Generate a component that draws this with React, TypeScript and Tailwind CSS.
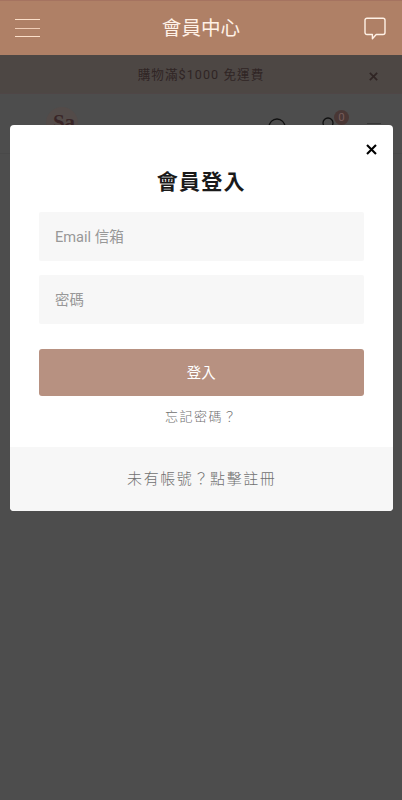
import { useState } from 'react';

function CloseIcon({ className }: { className?: string }) {
  return (
    <svg viewBox="0 0 12 12" fill="none" stroke="currentColor" strokeWidth="2.3" className={className}>
      <path d="M1.1 1.1 10.9 10.9M10.9 1.1 1.1 10.9" />
    </svg>
  );
}

function AppBar() {
  return (
    <header className="flex h-[55px] shrink-0 items-center justify-between border-t border-[#a57360] bg-[#af8066] pr-[16px] pl-[15px] text-[#fff1e6]">
      <button aria-label="選單" className="flex w-[25px] flex-col gap-[7.5px]">
        <span className="h-px w-full bg-[#fbdfc9]" />
        <span className="h-px w-full bg-[#f0cdb6]" />
        <span className="h-px w-full bg-[#fbdfc9]" />
      </button>
      <h1 className="mt-px ml-[-2px] text-[19.6px] leading-none">會員中心</h1>
      <button aria-label="訊息">
        <svg viewBox="0 0 22 24" fill="none" stroke="currentColor" strokeWidth="1.4" strokeLinejoin="round" className="mt-[2px] h-[24px] w-[22px]">
          <path d="M3 1.2h16a2 2 0 0 1 2 2v12.3a2 2 0 0 1-2 2h-6.8L8.4 21.8v-4.3H3a2 2 0 0 1-2-2V3.2a2 2 0 0 1 2-2Z" />
        </svg>
      </button>
    </header>
  );
}

function StoreHeader() {
  return (
    <div className="text-[#302524]">
      <div className="flex h-[39px] items-center border-b border-[#4f4646] bg-[#4d4744] pr-[24px] pl-[33px]">
        <p className="mt-[3px] flex-1 text-center text-[12.6px] tracking-[1.05px]">購物滿$1000 免運費</p>
        <CloseIcon className="mt-[4px] h-[9px] w-[9px]" />
      </div>
      <div className="flex h-[60px] items-start justify-between border-b border-[#494949] pt-[13px] pr-[21px] pl-[46px]">
        <div className="flex h-[32px] w-[32px] justify-center rounded-full bg-[#534b49] pl-[4px] font-[Liberation_Serif] text-[21px] leading-[30px] font-bold text-[#392527]">Sa</div>
        <div className="flex items-start text-[#111]">
          <svg viewBox="0 0 20 20" fill="none" stroke="currentColor" strokeWidth="1.3" className="mt-[11px] mr-[34px] h-[20px] w-[20px]">
            <circle cx="9" cy="9" r="8" />
            <path d="m15 15 4 4" />
          </svg>
          <div className="mr-[18px] flex">
            <svg viewBox="0 0 12 20" fill="none" stroke="currentColor" strokeWidth="1.3" className="mt-[10px] h-[20px] w-[12px]">
              <circle cx="6" cy="6" r="5" />
            </svg>
            <span className="mt-[3px] flex h-[15px] w-[15px] items-center justify-center rounded-full bg-[#493735] text-[11.5px] text-[#755c5a]">0</span>
          </div>
          <span className="mt-[16px] h-px w-[14px] bg-[#373737]" />
        </div>
      </div>
    </div>
  );
}

function LoginModal() {
  const [email, setEmail] = useState('');
  const [password, setPassword] = useState('');

  return (
    <section className="absolute top-[69.5px] right-[9px] left-[9.5px] overflow-hidden rounded-[4px] bg-white">
      <button aria-label="關閉" className="absolute top-[19px] right-[16px] text-black">
        <CloseIcon className="h-[11px] w-[11px]" />
      </button>
      <form className="flex h-[322.5px] flex-col px-[29.5px] pt-[43px]" onSubmit={(e) => e.preventDefault()}>
        <h2 className="text-center text-[21px] leading-[28px] font-bold tracking-[1.2px] text-[#1a1a1a]">會員登入</h2>
        <input
          type="email"
          value={email}
          onChange={(e) => setEmail(e.target.value)}
          placeholder="Email 信箱"
          className="mt-[16px] h-[49px] rounded-[2px] bg-[#f7f7f7] px-[16px] pt-[2px] text-[14.6px] placeholder:text-[#989898]"
        />
        <input
          type="password"
          value={password}
          onChange={(e) => setPassword(e.target.value)}
          placeholder="密碼"
          className="mt-[14.5px] h-[48.5px] rounded-[2px] bg-[#f7f7f7] px-[16px] pt-[2px] text-[14.4px] placeholder:text-[#989898]"
        />
        <button type="submit" className="mt-[25px] h-[47px] rounded-[3px] bg-[#b79181] pt-[4px] text-[14.4px] text-white">
          登入
        </button>
        <a href="#" className="mt-[11px] text-center text-[13px] leading-[20px] font-light tracking-[1.45px] text-[#707070]">忘記密碼？</a>
      </form>
      <a href="#" className="flex h-[64px] items-center justify-center bg-[#f7f7f7] pl-px text-[15px] font-light tracking-[1.6px] text-[#707070]">
        未有帳號？點擊註冊
      </a>
    </section>
  );
}

export default function App() {
  return (
    <div className="flex h-[800px] w-full flex-col overflow-hidden bg-[#4d4d4d] font-[Roboto,'Noto_Sans_CJK_TC',sans-serif]">
      <AppBar />
      <main className="relative flex-1">
        <StoreHeader />
        <LoginModal />
      </main>
    </div>
  );
}
